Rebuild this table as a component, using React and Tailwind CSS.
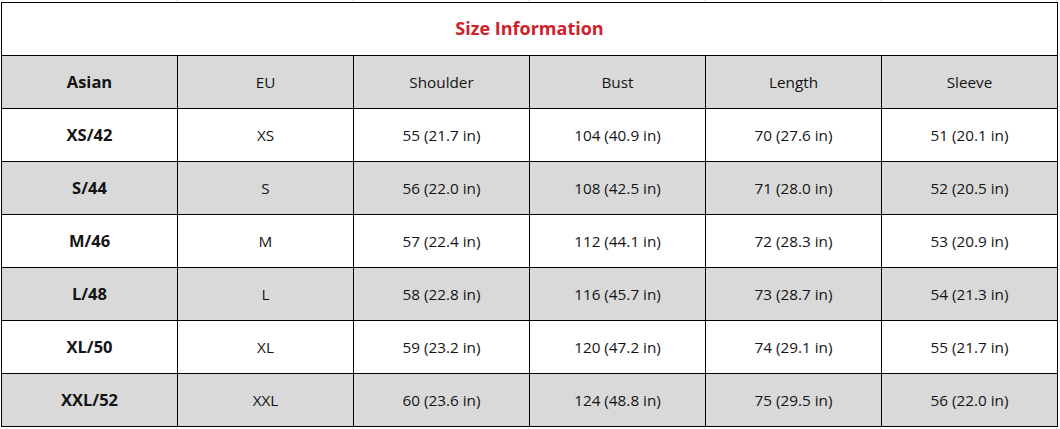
const headers = ['Asian', 'EU', 'Shoulder', 'Bust', 'Length', 'Sleeve']

const rows = [
    ['XS/42', 'XS', '55 (21.7 in)', '104 (40.9 in)', '70 (27.6 in)', '51 (20.1 in)'],
    ['S/44', 'S', '56 (22.0 in)', '108 (42.5 in)', '71 (28.0 in)', '52 (20.5 in)'],
    ['M/46', 'M', '57 (22.4 in)', '112 (44.1 in)', '72 (28.3 in)', '53 (20.9 in)'],
    ['L/48', 'L', '58 (22.8 in)', '116 (45.7 in)', '73 (28.7 in)', '54 (21.3 in)'],
    ['XL/50', 'XL', '59 (23.2 in)', '120 (47.2 in)', '74 (29.1 in)', '55 (21.7 in)'],
    ['XXL/52', 'XXL', '60 (23.6 in)', '124 (48.8 in)', '75 (29.5 in)', '56 (22.0 in)'],
]

function GridStrip() {
    // faint spreadsheet gridlines peeking above/below the table
    return (
        <div className="flex h-[2px] ml-px">
            {headers.map((h, i) => (
                <div key={i} className="w-[176px] h-full border-r border-[#e4e4e4]" />
            ))}
        </div>
    )
}

export default function App() {
    return (
        <div className="w-[1060px] h-[429px] bg-white text-[#141414]" style={{ fontFamily: '"Open Sans", "Noto Sans", sans-serif' }}>
            <GridStrip />
            <div className="ml-px w-[1057px] border-l border-t border-black">
                <div className="h-[53px] flex items-center justify-center pb-[2px] border-r border-b border-black">
                    <span className="text-[18px] font-bold text-[#d0202a]">Size Information</span>
                </div>
                <div className="grid grid-cols-[repeat(6,176px)] bg-[#d9d9d9]">
                    {headers.map((h, i) => (
                        <div key={h} className={`h-[53px] flex items-center justify-center border-r border-b border-black ${i === 0 ? 'font-bold text-[16.5px]' : 'text-[15.3px]'}`}>
                            {h}
                        </div>
                    ))}
                </div>
                {rows.map((row, r) => (
                    <div key={r} className={`grid grid-cols-[repeat(6,176px)] ${r % 2 === 1 ? 'bg-[#d9d9d9]' : 'bg-white'}`}>
                        {row.map((c, i) => (
                            <div key={i} className={`h-[53px] flex items-center justify-center border-r border-b border-black ${i === 0 ? 'font-bold text-[16.5px]' : 'text-[15.3px]'}`}>
                                {c}
                            </div>
                        ))}
                    </div>
                ))}
            </div>
            <GridStrip />
        </div>
    )
}
